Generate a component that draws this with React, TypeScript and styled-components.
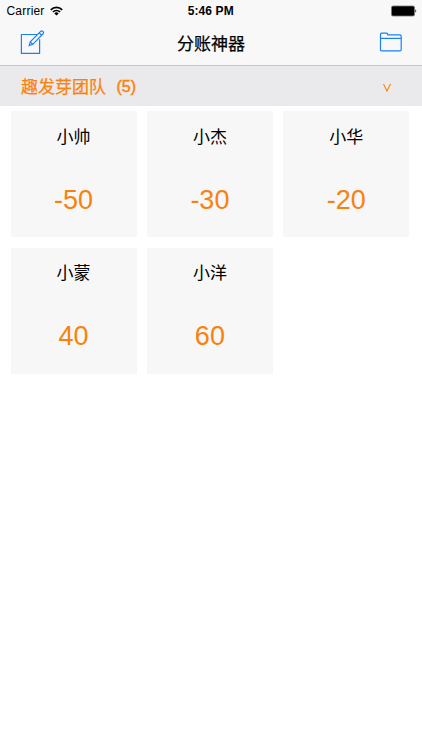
import React from "react";
import styled, { createGlobalStyle } from "styled-components";

const GlobalStyle = createGlobalStyle`
  * { box-sizing: border-box; }
  body {
    margin: 0;
    background: #fff;
    color: #000;
    font-family: "Liberation Sans", "Noto Sans CJK SC", sans-serif;
  }
`;

const Screen = styled.main`
  width: 422px;
  height: 750px;
  overflow: hidden;
  background: #fff;
`;

const Header = styled.header`
  height: 66px;
  background: #f8f8f8;
  border-bottom: 1px solid #c6c6c9;
`;

const StatusBar = styled.div`
  height: 22px;
  padding: 0 5px 0 6.5px;
  display: grid;
  grid-template-columns: 1fr auto 1fr;
  align-items: center;
`;

const Carrier = styled.span`
  display: flex;
  align-items: center;
  gap: 5.5px;
  font-size: 12px;
  line-height: 22px;
  letter-spacing: 0.2px;
`;

const Clock = styled.span`
  font-size: 12px;
  font-weight: 700;
  line-height: 22px;
  letter-spacing: 0.1px;
  margin-right: 2px;
`;

const BatterySlot = styled.span`
  display: flex;
  justify-content: flex-end;
`;

const NavBar = styled.nav`
  height: 43px;
  padding: 0 19px;
  display: grid;
  grid-template-columns: 1fr auto 1fr;
`;

const Title = styled.h1`
  margin: 0;
  font-size: 17px;
  font-weight: 400;
  line-height: 46px;
  -webkit-text-stroke: 0.25px currentColor;
`;

const IconButton = styled.button<{ $align: "start" | "end" }>`
  display: flex;
  align-self: start;
  justify-self: ${({ $align }) => $align};
  margin: 7px 0 0;
  padding: 0;
  border: 0;
  background: none;
  color: #1783ee;
`;

const GroupBar = styled.section`
  height: 40px;
  padding: 0 30px 0 21px;
  display: flex;
  align-items: center;
  justify-content: space-between;
  background: #eaeaec;
  color: #fa8310;
`;

const GroupName = styled.h2`
  margin: 0;
  padding-top: 4px;
  display: flex;
  gap: 10.5px;
  font-size: 17px;
  font-weight: 400;
  line-height: 40px;
  -webkit-text-stroke: 0.25px currentColor;
`;

const Count = styled.span`
  font-size: 16px;
  line-height: 38px;
  -webkit-text-stroke: 0.5px currentColor;
`;

const Members = styled.ul`
  margin: 0;
  padding: 5px 0 0 10.6px;
  list-style: none;
  display: grid;
  grid-template-columns: repeat(3, 126px);
  grid-auto-rows: 126px;
  gap: 10.5px 10.3px;
`;

const Card = styled.li`
  display: flex;
  flex-direction: column;
  align-items: center;
  background: #f7f7f7;
`;

const Name = styled.span`
  margin-top: 13.8px;
  font-size: 17px;
  line-height: 25px;
  font-weight: 400;
`;

const Amount = styled.span`
  margin-top: 33.9px;
  font-size: 27px;
  line-height: 32px;
  color: #f9820f;
`;

const members = [
  { name: "小帅", amount: -50 },
  { name: "小杰", amount: -30 },
  { name: "小华", amount: -20 },
  { name: "小蒙", amount: 40 },
  { name: "小洋", amount: 60 },
];

const WifiIcon = () => (
  <svg width="13" height="10" viewBox="0 0 13 10" fill="none" stroke="#000" strokeWidth="1.7">
    <path d="M0.8 3.8a8.1 8.1 0 0 1 11.4 0" />
    <path d="M2.9 6a5.1 5.1 0 0 1 7.2 0" />
    <path d="M6.5 9.6 4.3 7.4a3.1 3.1 0 0 1 4.4 0z" fill="#000" stroke="none" />
  </svg>
);

const BatteryIcon = () => (
  <svg width="26" height="12" viewBox="0 0 26 12">
    <rect x="0.5" y="1" width="23" height="10" rx="1.5" fill="#000" stroke="#777" strokeWidth="0.8" />
    <path d="M24.3 4.4v3.2c1.3-.3 1.3-2.9 0-3.2z" fill="#222" />
  </svg>
);

const ComposeIcon = () => (
  <svg width="27" height="26" viewBox="0 0 27 26" fill="none" stroke="currentColor" strokeWidth="1.2">
    <path d="M18 5.5H2.4v18.8h18.2V10.2" />
    <path d="M10.2 16.6l1.1-3.8L21.9 2.2c1.2-1.1 3.4 1.2 2.4 2.3L13.8 15.3z" />
    <path d="M20.2 3.9l2.5 2.4M11.3 12.8l2.5 2.5" />
  </svg>
);

const FolderIcon = () => (
  <svg width="24" height="25" viewBox="0 0 24 25" fill="none" stroke="currentColor" strokeWidth="1.2">
    <path d="M1.5 20.7V5.2q0-1.1 1.1-1.1h4.7q1 0 1.2.9l.2.8h12.2q1.3 0 1.3 1.2v13.7q0 1.1-1.1 1.1H2.6q-1.1 0-1.1-1.1z" />
    <path d="M1.5 9.4h20.7" />
  </svg>
);

const ChevronIcon = () => (
  <svg width="10" height="12" viewBox="0 0 10 12" fill="none" stroke="currentColor" strokeWidth="1.1">
    <path d="M1.5 4 5 11 8.5 4" />
  </svg>
);

export default function App() {
  return (
    <Screen>
      <GlobalStyle />
      <Header>
        <StatusBar>
          <Carrier>
            Carrier
            <WifiIcon />
          </Carrier>
          <Clock>5:46 PM</Clock>
          <BatterySlot>
            <BatteryIcon />
          </BatterySlot>
        </StatusBar>
        <NavBar>
          <IconButton $align="start" aria-label="Compose">
            <ComposeIcon />
          </IconButton>
          <Title>分账神器</Title>
          <IconButton $align="end" aria-label="Folder">
            <FolderIcon />
          </IconButton>
        </NavBar>
      </Header>
      <GroupBar>
        <GroupName>
          趣发芽团队
          <Count>(5)</Count>
        </GroupName>
        <ChevronIcon />
      </GroupBar>
      <Members>
        {members.map((member) => (
          <Card key={member.name}>
            <Name>{member.name}</Name>
            <Amount>{member.amount}</Amount>
          </Card>
        ))}
      </Members>
    </Screen>
  );
}
